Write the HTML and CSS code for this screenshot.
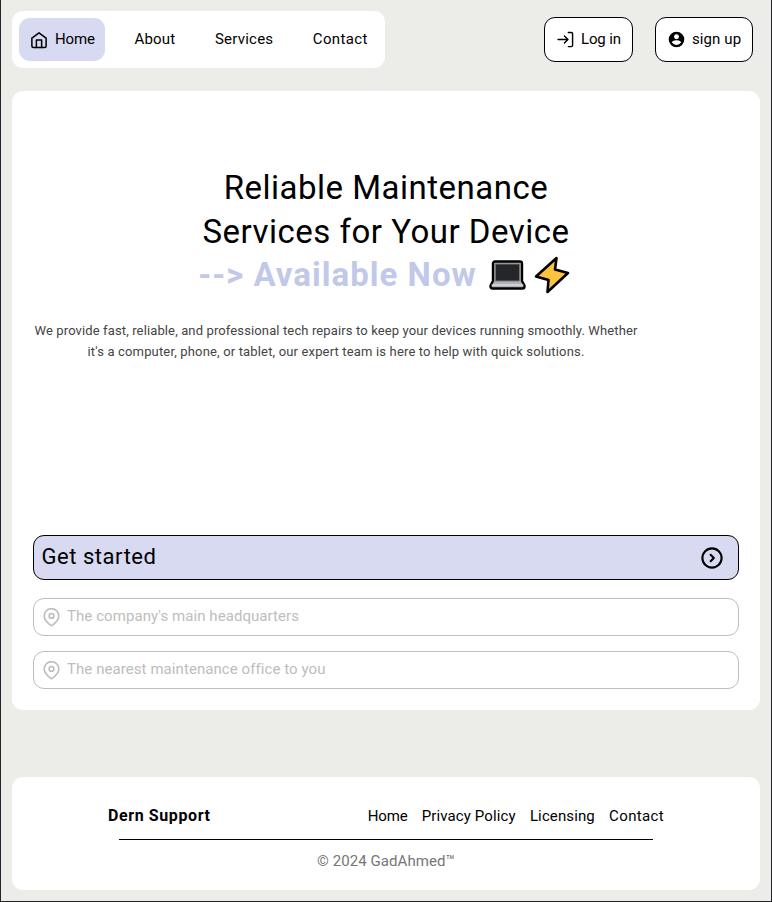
FILE: index.html
```html
<!DOCTYPE html>
<html lang="en">
<head>
<meta charset="utf-8">
<title>Dern Support</title>
<link rel="stylesheet" href="styles.css">
</head>
<body>
<header class="header">
  <nav class="nav">
    <a class="nav-link active"><svg class="icon-home" viewBox="0 0 24 24"><path d="M2.500 9.500 12 2.500l9.500 7V20a2 2 0 0 1-2 2h-15a2 2 0 0 1-2-2Z"/><path d="M8.500 22V12h7v10"/></svg><span class="t-home">Home</span></a>
    <a class="nav-link"><span class="t-about">About</span></a>
    <a class="nav-link"><span class="t-services">Services</span></a>
    <a class="nav-link"><span class="t-contact">Contact</span></a>
  </nav>
  <div class="account">
    <button class="account-btn"><svg class="icon-login" viewBox="0 0 24 24"><path d="M16 2h4a2 2 0 0 1 2 2v16a2 2 0 0 1-2 2h-4M1.500 12h14M10.500 7l5 5-5 5"/></svg><span class="t-home">Log in</span></button>
    <button class="account-btn signup"><svg class="icon-user" viewBox="0 0 24 24"><path fill="currentColor" stroke="none" fill-rule="evenodd" d="M12 1a11 11 0 1 0 0 22 11 11 0 0 0 0-22Zm0 3.600a3.500 3.500 0 1 1 0 7 3.500 3.500 0 0 1 0-7Zm0 15.200a8 8 0 0 1-6.500-3.500c0-2.200 4.300-3.300 6.500-3.300s6.500 1.100 6.500 3.300a8 8 0 0 1-6.500 3.500Z"/></svg><span class="t-signup">sign up</span></button>
  </div>
</header>
<main class="card">
  <h1 class="title">
    <span>Reliable Maintenance</span>
    <span>Services for Your Device</span>
    <span class="highlight"><span class="now">--&gt; Available Now</span>
      <svg class="laptop" viewBox="0 0 37 30"><path d="M6 1.500h25a2 2 0 0 1 2 2V21l2.500 4.500v1q0 2-2 2h-30q-2 0-2-2v-1L4 21V3.500a2 2 0 0 1 2-2Z" fill="#b1b3b5" stroke="#000" stroke-width="2.400"/><path d="M6.500 4h24v17h-24Z" fill="#24262a" stroke="#777" stroke-width="1"/><path d="M3 25h31" stroke="#eee" stroke-width="1"/></svg>
      <svg class="bolt" viewBox="0 0 36 38"><path d="M22.500 2 2 20.500l12.500 3.500-1 12L34 17l-13-3.500Z" fill="#fcc33c" stroke="#000" stroke-width="2.600" stroke-linejoin="round"/></svg>
    </span>
  </h1>
  <p class="lead"><span class="lead-1">We provide fast, reliable, and professional tech repairs to keep your devices running smoothly. Whether</span><br><span class="lead-2">it's a computer, phone, or tablet, our expert team is here to help with quick solutions.</span></p>
  <div class="actions">
    <button class="start"><span>Get started</span><svg class="icon-go" viewBox="0 0 24 24"><circle cx="12" cy="12" r="10.500"/><path d="m10.500 8.500 3.500 3.500-3.500 3.500"/></svg></button>
    <div class="place"><svg class="icon-pin" viewBox="0 0 24 24"><path d="M12 22.500S2.800 16 2.800 10a9.200 9.200 0 0 1 18.400 0c0 6-9.200 12.500-9.200 12.500Z"/><circle cx="12" cy="10" r="3"/></svg><span>The company's main headquarters</span></div>
    <div class="place"><svg class="icon-pin" viewBox="0 0 24 24"><path d="M12 22.500S2.800 16 2.800 10a9.200 9.200 0 0 1 18.400 0c0 6-9.200 12.500-9.200 12.500Z"/><circle cx="12" cy="10" r="3"/></svg><span>The nearest maintenance office to you</span></div>
  </div>
</main>
<footer class="footer">
  <div class="footer-top">
    <strong class="brand">Dern Support</strong>
    <nav class="links"><a class="t-home">Home</a><a class="t-policy">Privacy Policy</a><a class="t-policy">Licensing</a><a class="t-contact">Contact</a></nav>
  </div>
  <hr class="rule">
  <p class="copy">© 2024 GadAhmed™</p>
</footer>
</body>
</html>
```
FILE: styles.css
```css
* { box-sizing: border-box; }
body { margin: 0; height: 902px; padding: 11px 11px 0; border: solid #242428; border-width: 0 1px 1px; background: #ecede8; color: #000; font: 15px/20px Roboto, sans-serif; overflow: hidden; }
svg { fill: none; stroke: currentColor; stroke-width: 2; stroke-linecap: round; stroke-linejoin: round; flex: none; }
span, .links a { white-space: nowrap; }
.header { display: flex; justify-content: space-between; height: 57px; }
.nav { display: flex; align-items: center; width: 373px; padding-left: 7px; background: #fff; border-radius: 11px; }
.nav-link { display: flex; align-items: center; margin-left: 39.5px; }
.nav-link span, .account-btn span { padding-bottom: 1px; }
.nav-link.active { width: 86px; height: 43px; margin: 0 -10px 0 0; padding-left: 11px; gap: 7px; background: #d7daf0; border-radius: 11px; }
.icon-home { width: 18px; height: 18px; }
.t-home { letter-spacing: -0.15px; }
.t-about { letter-spacing: 0.2px; }
.t-services { letter-spacing: 0.23px; }
.t-contact { letter-spacing: 0.35px; }
.t-signup { letter-spacing: 0.1px; }
.t-policy { letter-spacing: 0.12px; }
.account { display: flex; gap: 22px; padding: 6px 7px 0 0; }
.account-btn { display: flex; align-items: center; width: 89px; height: 45px; padding: 0 0 0 12px; gap: 7px; border: 1px solid #000; border-radius: 11px; background: #fff; font: inherit; color: inherit; }
.account-btn.signup { width: 98px; }
.icon-login, .icon-user { width: 17px; height: 17px; }
.card { margin-top: 23px; height: 619px; padding: 75px 21px 21px; background: #fff; border-radius: 11px; display: flex; flex-direction: column; }
.title { margin: 0; display: flex; flex-direction: column; align-items: center; font-size: 33px; line-height: 43.500px; font-weight: 400; letter-spacing: 0.5px; }
.highlight { display: flex; align-items: center; padding-right: 4px; color: #c2c8e8; font-weight: 700; }
.now { letter-spacing: 1.02px; }
.laptop { width: 37px; height: 30px; margin-left: 12px; }
.bolt { width: 36px; height: 38px; margin-left: 8px; }
.lead { margin: 23px 0 0; width: 606px; text-align: center; color: #444; font-size: 13px; line-height: 21px; }
.lead-1 { letter-spacing: 0.125px; }
.lead-2 { letter-spacing: 0.16px; }
.actions { margin-top: auto; }
.start { display: flex; align-items: center; justify-content: space-between; width: 100%; height: 45px; padding: 0 15px 2px 7.5px; border: 1px solid #000; border-radius: 11px; background: #d7daf0; color: #000; font: 22px Roboto, sans-serif; letter-spacing: 0.54px; }
.icon-go { width: 22px; height: 22px; margin-top: 2px; stroke-width: 2.3; }
.place { display: flex; align-items: center; height: 38px; margin-top: 18px; padding-left: 8px; gap: 6px; border: 1px solid #bdbdbd; border-radius: 11px; color: #bdbdbd; letter-spacing: 0.07px; }
.place span { padding-bottom: 2px; }
.place + .place { margin-top: 15px; }
.icon-pin { width: 19px; height: 19px; }
.footer { margin-top: 67px; height: 113px; padding: 29px 96px 0; background: #fff; border-radius: 11px; }
.footer-top { display: flex; justify-content: space-between; }
.brand { font-size: 16px; letter-spacing: 0.6px; }
.links { display: flex; gap: 14.2px; }
.rule { margin: 13px 11px 11px; border: 0; border-top: 1px solid #000; }
.copy { margin: 0; text-align: center; color: #777; letter-spacing: 0.08px; }
```
